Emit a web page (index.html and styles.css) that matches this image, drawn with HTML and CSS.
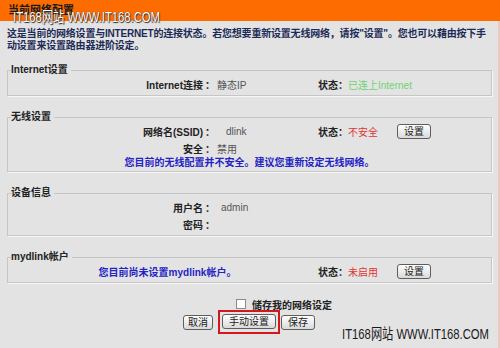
FILE: index.html
```html
<!DOCTYPE html>
<html lang="zh-CN">
<head>
<meta charset="utf-8">
<title>当前网络配置</title>
<link rel="stylesheet" href="styles.css">
</head>
<body>
<div class="header">当前网络配置</div>
<div class="wm wm-top">IT168网站 WWW.IT168.COM</div>
<div class="main">
  <p class="intro">这是当前的网络设置与INTERNET的连接状态。若您想要重新设置无线网络，请按"设置"。您也可以藉由按下手<br>动设置来设置路由器进阶设定。</p>

  <fieldset class="box">
    <legend>Internet设置</legend>
    <div class="row">
      <span class="lbl">Internet连接</span><span class="colon">：</span><span class="val">静态IP</span>
      <span class="st"><b>状态：</b><span class="ok">已连上Internet</span></span>
    </div>
  </fieldset>

  <fieldset class="box">
    <legend>无线设置</legend>
    <div class="row">
      <span class="lbl">网络名(SSID)</span><span class="colon">：</span><span class="val val-pad">dlink</span>
      <span class="st"><b>状态：</b><span class="bad">不安全</span></span>
      <button class="btn">设置</button>
    </div>
    <div class="row">
      <span class="lbl">安全</span><span class="colon">：</span><span class="val">禁用</span>
    </div>
    <div class="msg">您目前的无线配置并不安全。建议您重新设定无线网络。</div>
  </fieldset>

  <fieldset class="box">
    <legend>设备信息</legend>
    <div class="row">
      <span class="lbl">用户名</span><span class="colon">：</span><span class="val val-pad2">admin</span>
    </div>
    <div class="row">
      <span class="lbl">密码</span><span class="colon">：</span><span class="val"></span>
    </div>
  </fieldset>

  <fieldset class="box">
    <legend>mydlink帐户</legend>
    <div class="row">
      <span class="wide">您目前尚未设置mydlink帐户。</span>
      <span class="st"><b>状态：</b><span class="bad">未启用</span></span>
      <button class="btn">设置</button>
    </div>
  </fieldset>

  <div class="save-row">
    <input type="checkbox" class="chk">
    <span>储存我的网络设定</span>
  </div>
  <div class="actions">
    <button class="btn btn-cancel">取消</button>
    <span class="mark"><button class="btn">手动设置</button></span>
    <button class="btn">保存</button>
  </div>
</div>
<div class="wm wm-bottom">IT168网站 WWW.IT168.COM</div>
</body>
</html>
```
FILE: styles.css
```css
html, body {
  margin: 0;
  padding: 0;
}
body {
  width: 500px;
  height: 348px;
  overflow: hidden;
  position: relative;
  background: #e3e3e3;
  font-family: "Liberation Sans", "Noto Sans CJK SC", sans-serif;
  font-size: 10px;
  color: #222;
}
.header {
  height: 21px;
  line-height: 21px;
  background: #fd6c00;
  padding-left: 8px;
  font-size: 11px;
  font-weight: bold;
  color: #1a1a1a;
}
.main {
  height: 327px;
  box-sizing: border-box;
  border-right: 2px solid #eccbbd;
  padding-top: 7px;
}
.intro {
  margin: 0 0 12px;
  padding: 0 7px;
  line-height: 12px;
  font-weight: bold;
  color: #1d2b57;
  letter-spacing: -0.2px;
  white-space: nowrap;
}
.box {
  margin: 15px 6px 0 7px;
  padding: 0 3px 2px;
  border: 1px solid #c6c6c6;
  box-shadow: 1px 1px 0 #f7f7f7;
  min-width: 0;
}
.intro + .box {
  margin-top: 0;
}
.box legend {
  padding: 0 3px 0 0;
  line-height: 12px;
  font-weight: bold;
  color: #222;
}
.row {
  display: grid;
  grid-template-columns: 192px 14px 101px 79px auto;
  align-items: center;
  height: 17px;
}
.lbl {
  text-align: right;
  font-weight: bold;
}
.colon {
  text-align: center;
  font-weight: bold;
}
.val {
  color: #555;
}
.val-pad {
  padding-left: 9px;
}
.val-pad2 {
  padding-left: 4px;
}
.wide {
  grid-column: 1 / 4;
  text-align: center;
  font-weight: bold;
  color: #2424c4;
  padding-left: 6px;
}
.st {
  white-space: nowrap;
}
.st b {
  color: #222;
}
.ok {
  color: #6fd36f;
}
.bad {
  color: #e23434;
}
.msg {
  height: 12px;
  line-height: 12px;
  text-align: center;
  font-weight: bold;
  color: #2424c4;
}
.btn {
  height: 15px;
  padding: 0 6px;
  margin: 0;
  border: 1px solid #5e5e5e;
  border-radius: 3px;
  background: linear-gradient(#ffffff, #d9d9d9);
  font-family: "Liberation Sans", "Noto Sans CJK SC", sans-serif;
  font-size: 10px;
  line-height: 13px;
  color: #222;
  justify-self: start;
}
.btn-cancel {
  padding: 0 4px;
  margin-right: 5px;
}
.save-row {
  display: flex;
  justify-content: center;
  align-items: center;
  height: 12px;
  margin-top: 15px;
  padding-left: 70px;
  gap: 6px;
  font-weight: bold;
  color: #222;
}
.chk {
  appearance: none;
  -webkit-appearance: none;
  width: 10px;
  height: 10px;
  margin: 0;
  border: 1px solid #8a8a8a;
  background: #fff;
}
.actions {
  display: flex;
  justify-content: center;
  align-items: center;
}
.mark {
  display: inline-flex;
  border: 2px solid #d3171d;
  padding: 2px 2px 3px;
  margin-right: 1px;
}
.wm {
  position: absolute;
  font-family: "Liberation Sans", sans-serif;
  font-size: 15px;
  line-height: 17px;
  white-space: nowrap;
  transform: scaleX(0.75);
  transform-origin: left top;
}
.wm-top {
  left: 13px;
  top: 8px;
  color: #fff;
  text-shadow: 0 0 1px #222, 1px 1px 1px #333;
}
.wm-bottom {
  left: 342px;
  top: 325px;
  color: #1a1a1a;
}
```
